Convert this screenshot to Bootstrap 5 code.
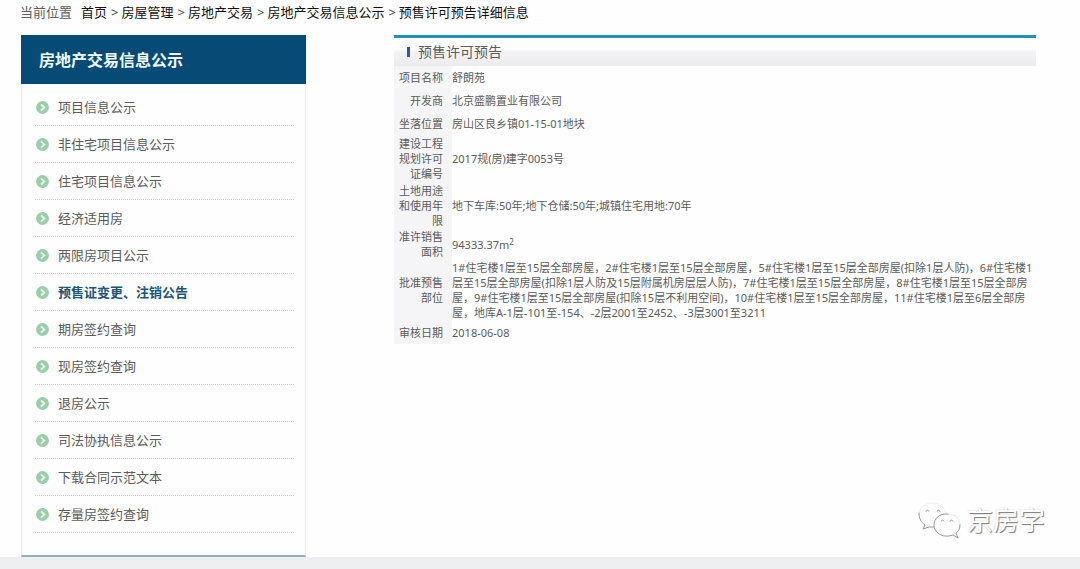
<!DOCTYPE html>
<html lang="zh-CN">
<head>
<meta charset="utf-8">
<meta name="viewport" content="width=device-width, initial-scale=1">
<title>预售许可预告详细信息</title>
<link href="https://cdn.jsdelivr.net/npm/bootstrap@5.3.0/dist/css/bootstrap.min.css" rel="stylesheet">
<style>
body { font-family: "Noto Sans", "Noto Sans CJK SC", sans-serif; font-size: 13px; line-height: 18px; color: #5c5c5c; background: #fefefe; }
a { color: inherit; text-decoration: none; }
.crumbs { padding: 3px 20px 14px; }
.crumbs ol { margin-left: 9px; }
.crumbs a, .crumbs [aria-current] { color: #111; }
.crumbs li + li::before { content: ">"; color: #444; margin: 0 3px 0 4px; }
.page-columns { gap: 88px; padding: 0 44px 0 21px; }
.side { width: 285px; border: 1px solid #e8ecee; border-top: 0; border-bottom: 2px solid #8fb0b6; }
.side-title { margin: 0 -1px; padding: 16px 18px 15px; background: #064a76; color: #f2fbff; font-size: 16px; font-weight: 700; line-height: 18px; }
.side-menu { padding: 5px 11px 22px 13px; }
.side-menu a { gap: 9px; height: 37px; padding-left: 1px; border-bottom: 1px dotted #d0d0d0; }
.side-menu a.active { color: #1d557a; font-weight: 700; }
.side-menu svg { width: 13px; height: 13px; }
.panel-title { height: 31px; padding: 0 0 0 13px; gap: 8px; border-top: 3px solid #2690b8; background: linear-gradient(#fefefe 40%, #f3f2f4 50%, #ececee); font-size: 14px; font-weight: 400; color: #5c5c5c; }
.panel-title::before { content: ""; width: 3px; height: 10px; background: #3653a8; }
.info { font-size: 11px; line-height: 15px; }
.info th, .info td { padding: 4px 0; vertical-align: middle; }
.info th { width: 58px; padding-left: 5px; padding-right: 9px; background: #f5f4f6; font-weight: 400; text-align: right; }
.info .two-line > *, .info .four-line > * { padding-top: 0; padding-bottom: 1px; }
.info .three-line > * { padding-top: 1px; padding-bottom: 1px; }
.info sup { font-size: 8px; line-height: 0; }
.page-foot { min-height: 12px; background: #eeeff0; }
.stamp { right: 35px; bottom: 30px; gap: 6px; font-size: 26px; line-height: 36px; color: #fff; text-shadow: 1px 1px 1px #777, -1px -1px 1px #eee; }
.stamp svg { width: 44px; height: 38px; }
</style>
</head>
<body class="d-flex flex-column min-vh-100 position-relative">
<svg class="d-none" aria-hidden="true">
  <symbol id="bullet" viewBox="0 0 13 13"><circle cx="6.5" cy="6.5" r="6.4" fill="#98cfaa"/><path d="M5 3.4 8.4 6.5 5 9.6" fill="none" stroke="#f4fff6" stroke-width="1.7"/></symbol>
</svg>
<nav class="crumbs d-flex" aria-label="当前位置">
  <span>当前位置</span>
  <ol class="list-unstyled d-flex mb-0">
    <li><a href="#">首页</a></li>
    <li><a href="#">房屋管理</a></li>
    <li><a href="#">房地产交易</a></li>
    <li><a href="#">房地产交易信息公示</a></li>
    <li><span aria-current="page">预售许可预告详细信息</span></li>
  </ol>
</nav>
<div class="page-columns d-flex align-items-start">
  <aside class="side flex-shrink-0">
    <h2 class="side-title">房地产交易信息公示</h2>
    <nav class="side-menu d-flex flex-column">
      <a class="d-flex align-items-center" href="#"><svg><use href="#bullet"/></svg>项目信息公示</a>
      <a class="d-flex align-items-center" href="#"><svg><use href="#bullet"/></svg>非住宅项目信息公示</a>
      <a class="d-flex align-items-center" href="#"><svg><use href="#bullet"/></svg>住宅项目信息公示</a>
      <a class="d-flex align-items-center" href="#"><svg><use href="#bullet"/></svg>经济适用房</a>
      <a class="d-flex align-items-center" href="#"><svg><use href="#bullet"/></svg>两限房项目公示</a>
      <a class="d-flex align-items-center active" href="#"><svg><use href="#bullet"/></svg>预售证变更、注销公告</a>
      <a class="d-flex align-items-center" href="#"><svg><use href="#bullet"/></svg>期房签约查询</a>
      <a class="d-flex align-items-center" href="#"><svg><use href="#bullet"/></svg>现房签约查询</a>
      <a class="d-flex align-items-center" href="#"><svg><use href="#bullet"/></svg>退房公示</a>
      <a class="d-flex align-items-center" href="#"><svg><use href="#bullet"/></svg>司法协执信息公示</a>
      <a class="d-flex align-items-center" href="#"><svg><use href="#bullet"/></svg>下载合同示范文本</a>
      <a class="d-flex align-items-center" href="#"><svg><use href="#bullet"/></svg>存量房签约查询</a>
    </nav>
  </aside>
  <main class="flex-fill">
    <h1 class="panel-title d-flex align-items-center mb-0">预售许可预告</h1>
    <table class="info w-100">
      <tbody>
        <tr><th scope="row">项目名称</th><td>舒朗苑</td></tr>
        <tr><th scope="row">开发商</th><td>北京盛鹏置业有限公司</td></tr>
        <tr><th scope="row">坐落位置</th><td>房山区良乡镇01-15-01地块</td></tr>
        <tr class="three-line"><th scope="row">建设工程规划许可证编号</th><td>2017规(房)建字0053号</td></tr>
        <tr class="three-line"><th scope="row">土地用途和使用年限</th><td>地下车库:50年;地下仓储:50年;城镇住宅用地:70年</td></tr>
        <tr class="two-line"><th scope="row">准许销售面积</th><td>94333.37m<sup>2</sup></td></tr>
        <tr class="four-line"><th scope="row">批准预售部位</th><td>1#住宅楼1层至15层全部房屋，2#住宅楼1层至15层全部房屋，5#住宅楼1层至15层全部房屋(扣除1层人防)，6#住宅楼1<br>层至15层全部房屋(扣除1层人防及15层附属机房层层人防)，7#住宅楼1层至15层全部房屋，8#住宅楼1层至15层全部房<br>屋，9#住宅楼1层至15层全部房屋(扣除15层不利用空间)，10#住宅楼1层至15层全部房屋，11#住宅楼1层至6层全部房<br>屋，地库A-1层-101至-154、-2层2001至2452、-3层3001至3211</td></tr>
        <tr><th scope="row">审核日期</th><td>2018-06-08</td></tr>
      </tbody>
    </table>
  </main>
</div>
<footer class="page-foot flex-grow-1"></footer>
<div class="stamp position-absolute d-flex align-items-center">
  <svg viewBox="0 0 44 38" fill="#fff" stroke="#999" stroke-width="1" stroke-linecap="round" aria-hidden="true">
    <path stroke="#f0f0f0" d="M2 14C2 7 8 2 15 2s13 4 14 11"/>
    <path d="M2 12c0 6 2 9 6 12l-2 4 6-2 6 0"/>
    <path stroke="none" d="M31 13c-9-1-14 5-14 11 0 7 7 12 15 11 8-1 12-5 12-11 0-7-6-11-13-11"/>
    <path fill="none" stroke="#e8e8e8" d="M31 13c7 0 12 4 12 11"/>
    <path fill="none" d="M31 13c-9-1-14 5-14 11 0 7 7 12 15 11l4-1 5 3-2-5c3-2 4-5 4-8"/>
    <path fill="none" d="M9 10q1.500-2 3 0M20 10q1.500-2 3 0M24 20q1.500-2 3 0M33 20q1.500-2 3 0"/>
  </svg>
  <span>京房字</span>
</div>
<script src="https://cdn.jsdelivr.net/npm/bootstrap@5.3.0/dist/js/bootstrap.bundle.min.js"></script>
</body>
</html>
